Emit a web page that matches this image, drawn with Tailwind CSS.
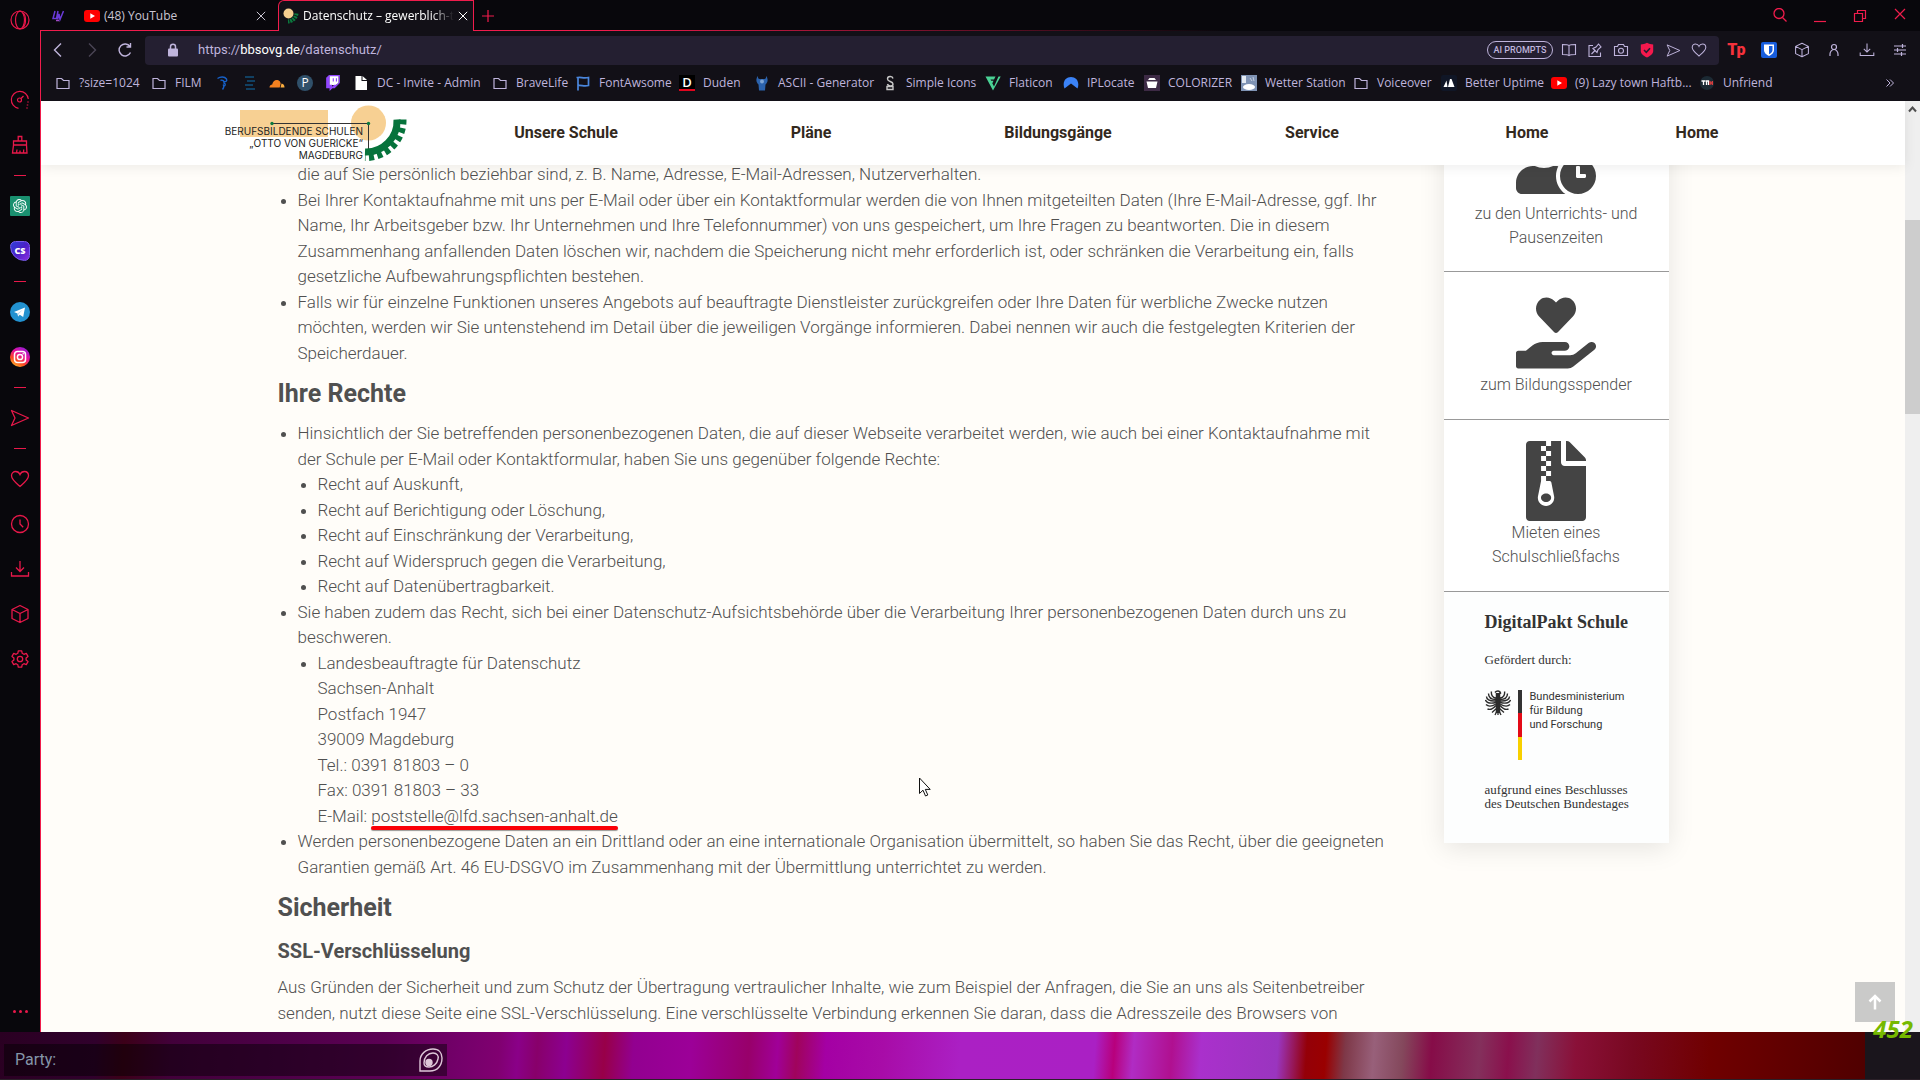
<!DOCTYPE html>
<html lang="de">
<head>
  <meta charset="UTF-8" />
  <meta name="viewport" content="width=device-width, initial-scale=1.0" />
  <title>Datenschutz – gewerblich-technische Schule</title>
  <script src="https://cdn.jsdelivr.net/npm/@tailwindcss/browser@4"></script>
</head>
<body class="h-screen flex flex-col overflow-hidden bg-[#08070c] font-['Open_Sans','Noto_Sans',sans-serif] text-xs text-[#bfb4dc]">

  <!-- Shared icons -->
  <svg class="hidden">
    <symbol id="i-folder" viewBox="0 0 16 16"><path d="M2 3.5h4.5l2 2H14v8H2z" fill="none" stroke="currentColor" stroke-width="1.2" /></symbol>
    <symbol id="i-heart" viewBox="0 0 20 20"><path d="M10 17.5C6 14 1.5 10.500 1.500 6.800 1.500 4 3.500 2.500 5.600 2.500c2 0 3.600 1.100 4.400 3 .8-1.900 2.400-3 4.400-3 2.100 0 4.100 1.500 4.100 4.300 0 3.700-4.500 7.200-8.500 10.700z" fill="none" stroke="currentColor" stroke-width="1.300" /></symbol>
    <symbol id="i-send" viewBox="0 0 20 20"><path d="M1.500 2.500L18.500 10l-17 7.500L5 10z" fill="none" stroke="currentColor" stroke-width="1.300" stroke-linejoin="round" /></symbol>
    <symbol id="i-download" viewBox="0 0 20 20"><path d="M10 2v10M6 8.500l4 4 4-4M1.500 13v4h17v-4" fill="none" stroke="currentColor" stroke-width="1.300" /></symbol>
    <symbol id="i-box" viewBox="0 0 20 20"><path d="M10 1.500l8 4v9l-8 4-8-4v-9zM2 5.500l8 4 8-4M10 9.500v9" fill="none" stroke="currentColor" stroke-width="1.300" stroke-linejoin="round" /></symbol>
    <symbol id="i-youtube" viewBox="0 0 16 16"><rect y="2" width="16" height="12" rx="3" fill="#f00" /><path d="M6.300 5.300v5.400L11 8z" fill="#fff" /></symbol>
    <symbol id="i-close" viewBox="0 0 12 12"><path d="M1 1l10 10M11 1L1 11" fill="none" stroke="currentColor" stroke-width="1.200" /></symbol>
  </svg>

  <div class="flex-1 flex min-h-0">

    <!-- Sidebar -->
    <aside class="w-10 shrink-0 flex flex-col items-center text-[#e8184a]">
      <button class="h-10 w-10 flex items-center justify-center" aria-label="Menü">
        <svg class="size-5" viewBox="0 0 20 20" fill="none" stroke="currentColor" stroke-width="1.2"><circle cx="10" cy="10" r="9" /><ellipse cx="10" cy="10" rx="4.500" ry="8.800" /><path d="M12.500 2.500c4 2 4 13 0 15" /></svg>
      </button>
      <nav class="mt-[37px] flex flex-col items-center">
        <button class="h-[45px] flex items-center" aria-label="GX Control">
          <svg class="size-5" viewBox="0 0 20 20" fill="none" stroke="currentColor" stroke-width="1.200"><path d="M8.500 18.300A8.500 8.500 0 1 1 18.300 9" /><circle cx="9.500" cy="10" r="2" /><path d="M11 8.500l2.500-2.500" /><path d="M18 11.500v1M17.500 14.500v1M17 17.500v1" stroke-width="1.500" /></svg>
        </button>
        <button class="h-[45px] flex items-center" aria-label="GX Cleaner">
          <svg class="size-5" viewBox="0 0 20 20" fill="none" stroke="currentColor" stroke-width="1.300"><path d="M8.200 6V1.500h3.600V6M3.500 6h13v4h-13zM3.500 10L2.500 18h14.500l-.5-8M6.500 18l.5-3.500M10 18v-2.500M13.500 18l.2-3.500" /></svg>
        </button>
        <div class="h-4 flex items-center"><span class="w-3 h-px bg-[#e8184a]"></span></div>
        <button class="h-[45px] flex items-center" aria-label="ChatGPT">
          <svg class="size-5" viewBox="0 0 30 30"><rect width="30" height="30" rx="1.500" fill="#1a9070" /><path transform="translate(4.500 4.500) scale(.875)" fill="#fff" d="M22.2819 9.8211a5.9847 5.9847 0 0 0-.5157-4.9108 6.0462 6.0462 0 0 0-6.5098-2.9A6.0651 6.0651 0 0 0 4.9807 4.1818a5.9847 5.9847 0 0 0-3.9977 2.9 6.0462 6.0462 0 0 0 .7427 7.0966 5.98 5.98 0 0 0 .511 4.9107 6.051 6.051 0 0 0 6.5146 2.9001A5.9847 5.9847 0 0 0 13.2599 24a6.0557 6.0557 0 0 0 5.7718-4.2058 5.9894 5.9894 0 0 0 3.9977-2.9001 6.0557 6.0557 0 0 0-.7475-7.0729zm-9.022 12.6081a4.4755 4.4755 0 0 1-2.8764-1.0408l.1419-.0804 4.7783-2.7582a.7948.7948 0 0 0 .3927-.6813v-6.7369l2.02 1.1686a.071.071 0 0 1 .038.052v5.5826a4.504 4.504 0 0 1-4.4945 4.4944zm-9.6607-4.1254a4.4708 4.4708 0 0 1-.5346-3.0137l.142.0852 4.783 2.7582a.7712.7712 0 0 0 .7806 0l5.8428-3.3685v2.3324a.0804.0804 0 0 1-.0332.0615L9.74 19.9502a4.4992 4.4992 0 0 1-6.1408-1.6464zM2.3408 7.8956a4.485 4.485 0 0 1 2.3655-1.9728V11.6a.7664.7664 0 0 0 .3879.6765l5.8144 3.3543-2.0201 1.1685a.0757.0757 0 0 1-.071 0l-4.8303-2.7865A4.504 4.504 0 0 1 2.3408 7.872zm16.5963 3.8558L13.1038 8.364 15.1192 7.2a.0757.0757 0 0 1 .071 0l4.8303 2.7913a4.4944 4.4944 0 0 1-.6765 8.1042v-5.6772a.79.79 0 0 0-.407-.667zm2.0107-3.0231l-.142-.0852-4.7735-2.7818a.7759.7759 0 0 0-.7854 0L9.409 9.2297V6.8974a.0662.0662 0 0 1 .0284-.0615l4.8303-2.7866a4.4992 4.4992 0 0 1 6.6802 4.66zM8.3065 12.863l-2.02-1.1638a.0804.0804 0 0 1-.038-.0567V6.0742a4.4992 4.4992 0 0 1 7.3757-3.4537l-.142.0805L8.704 5.459a.7948.7948 0 0 0-.3927.6813zm1.0976-2.3654l2.602-1.4998 2.6069 1.4998v2.9994l-2.5974 1.4997-2.6067-1.4997Z" /></svg>
        </button>
        <button class="h-[45px] flex items-center" aria-label="CS">
          <span class="size-5 rounded-md rounded-bl-2xl bg-linear-to-br from-[#2a3fd8] via-[#4a1fc8] to-[#8a2be0] border border-[#7b5cf0] text-white text-[9px] leading-[18px] font-extrabold text-center">CS</span>
        </button>
        <div class="h-4 flex items-center"><span class="w-3 h-px bg-[#e8184a]"></span></div>
        <button class="h-[45px] flex items-center" aria-label="Telegram">
          <svg class="size-5" viewBox="0 0 20 20"><circle cx="10" cy="10" r="10" fill="#2291d0" /><path d="M4 10l11-4.500-1.800 9.500-3.400-2.300-1.700 1.700-.6-3z" fill="#fff" /><path d="M7.500 11.400l5.500-4-4.300 4.700-.6 2.300z" fill="#b8d8ee" /></svg>
        </button>
        <button class="h-[45px] flex items-center" aria-label="Instagram">
          <svg class="size-5" viewBox="0 0 20 20"><defs><linearGradient id="ig" x1="0.200" y1="1" x2="0.800" y2="0"><stop offset="0" stop-color="#ffc02e" /><stop offset=".3" stop-color="#fb4a20" /><stop offset=".6" stop-color="#e8109a" /><stop offset="1" stop-color="#8a1ee0" /></linearGradient></defs><circle cx="10" cy="10" r="10" fill="url(#ig)" /><rect x="4.500" y="4.500" width="11" height="11" rx="3" fill="none" stroke="#fff" stroke-width="1.500" /><circle cx="10" cy="10" r="2.600" fill="none" stroke="#fff" stroke-width="1.500" /><circle cx="13.200" cy="6.800" r=".8" fill="#fff" /></svg>
        </button>
        <div class="h-4 flex items-center"><span class="w-3 h-px bg-[#e8184a]"></span></div>
        <button class="h-[45px] flex items-center" aria-label="Flow"><svg class="size-5"><use href="#i-send" /></svg></button>
        <div class="h-4 flex items-center"><span class="w-3 h-px bg-[#e8184a]"></span></div>
        <button class="h-[45px] flex items-center" aria-label="Lesezeichen"><svg class="size-5"><use href="#i-heart" /></svg></button>
        <button class="h-[45px] flex items-center" aria-label="Verlauf">
          <svg class="size-5" viewBox="0 0 20 20" fill="none" stroke="currentColor" stroke-width="1.300"><circle cx="10" cy="10" r="8.500" /><path d="M10 5.500V10l3.200 3.200" /></svg>
        </button>
        <button class="h-[45px] flex items-center" aria-label="Downloads"><svg class="size-5"><use href="#i-download" /></svg></button>
        <button class="h-[45px] flex items-center" aria-label="Erweiterungen"><svg class="size-5"><use href="#i-box" /></svg></button>
        <button class="h-[45px] flex items-center" aria-label="Einstellungen">
          <svg class="size-5" viewBox="0 0 20 20" fill="none" stroke="currentColor" stroke-width="1.300" stroke-linejoin="round"><circle cx="10" cy="10" r="2.700" /><path d="M8.300 1.800h3.400l.5 2.500 1.700 1 2.400-.9 1.700 3-1.900 1.600v2l1.900 1.600-1.700 3-2.400-.9-1.700 1-.5 2.500H8.300l-.5-2.500-1.700-1-2.400.9-1.700-3L3.900 11V9L2 7.400l1.700-3 2.400.9 1.700-1z" /></svg>
        </button>
      </nav>
      <button class="mt-auto mb-[11px] h-5 flex items-center gap-[3px]" aria-label="Mehr">
        <span class="size-[3px] rounded-full bg-[#e8184a]"></span><span class="size-[3px] rounded-full bg-[#e8184a]"></span><span class="size-[3px] rounded-full bg-[#e8184a]"></span>
      </button>
    </aside>

    <div class="flex-1 min-w-0 flex flex-col">

      <!-- Tabs -->
      <header class="relative h-[31px] shrink-0 flex items-center">
        <div class="absolute inset-x-0 bottom-0 h-px bg-linear-to-r from-[#f01c4c] from-30% to-transparent to-63%"></div>
        <button class="w-9 flex justify-center" aria-label="Angehefteter Tab">
          <svg class="size-3" viewBox="0 0 12 12" fill="none" stroke-width="1.500"><path d="M3 1L1 8.500h3.500L6 1M5.500 9.500L7 4l1 5.500L11.500 1" stroke="#6a3ad8" /><path d="M4 10.500h3" stroke="#a04ac0" /></svg>
        </button>
        <div class="flex w-[202px] items-center gap-1 pl-2 pr-3 text-[#c9c5d2]">
          <svg class="size-4"><use href="#i-youtube" /></svg>
          <span>(48) YouTube</span>
          <button class="ml-auto" aria-label="Tab schließen"><svg class="size-[10px]"><use href="#i-close" /></svg></button>
        </div>
        <div class="relative flex h-[31px] w-[196px] items-center gap-1 border-x border-t border-[#f01c4c] rounded-tl-md bg-[#121017] pl-1 pr-[10px] text-white">
          <svg class="size-4 shrink-0" viewBox="0 0 16 16"><circle cx="5.500" cy="5.500" r="5" fill="#f6cf90" /><path d="M13.500 5.500A9 9 0 0 1 5 13.500" fill="none" stroke="#0b7a3e" stroke-width="4" stroke-dasharray="2 .8" /></svg>
          <span class="whitespace-nowrap mask-r-from-85%">Datenschutz – gewerblich-t</span>
          <button class="ml-auto shrink-0" aria-label="Tab schließen"><svg class="size-[10px]"><use href="#i-close" /></svg></button>
        </div>
        <button class="ml-2 text-[#f01c4c]" aria-label="Neuer Tab"><svg class="size-3" viewBox="0 0 12 12" stroke="currentColor" stroke-width="1.200"><path d="M6 0v12M0 6h12" /></svg></button>
        <div class="ml-auto flex text-[#f01c4c]">
          <button class="w-10 flex justify-center" aria-label="Suchen"><svg class="size-4" viewBox="0 0 16 16" fill="none" stroke="currentColor" stroke-width="1.300"><circle cx="7" cy="5.500" r="5" /><path d="M10.500 9.500l4 4" /></svg></button>
          <button class="w-10 flex justify-center" aria-label="Minimieren"><svg class="size-4" viewBox="0 0 16 16" stroke="currentColor" stroke-width="1.200"><path d="M2 13.500h12" /></svg></button>
          <button class="w-10 flex justify-center" aria-label="Verkleinern"><svg class="size-4" viewBox="0 0 16 16" fill="none" stroke="currentColor" stroke-width="1.200"><path d="M2.500 5.500h8v8h-8zM5.500 5.500v-3h8v8h-3" /></svg></button>
          <button class="w-10 flex justify-center" aria-label="Schließen"><svg class="size-3"><use href="#i-close" /></svg></button>
        </div>
      </header>

      <div class="flex-1 min-h-0 flex flex-col border-l border-[#f01c4c] bg-[#121017]">

        <!-- Address bar -->
        <div class="h-[38px] shrink-0 flex items-center pr-1">
          <button class="w-[34px] flex justify-center" aria-label="Zurück"><svg class="size-4" viewBox="0 0 16 16" fill="none" stroke="currentColor" stroke-width="1.400"><path d="M11 1.500L4.500 8l6.500 6.500" /></svg></button>
          <button class="w-[33px] flex justify-center text-[#4a4556]" aria-label="Vor"><svg class="size-4" viewBox="0 0 16 16" fill="none" stroke="currentColor" stroke-width="1.400"><path d="M5 1.500L11.500 8 5 14.500" /></svg></button>
          <button class="w-[34px] flex justify-center" aria-label="Neu laden"><svg class="size-4" viewBox="0 0 16 16" fill="none" stroke="currentColor" stroke-width="1.400"><path d="M13.500 10.500a6 6 0 1 1-.5-6M13.500 1v4h-4" /></svg></button>
          <div class="ml-[3px] h-[29px] flex-1 flex items-center rounded-sm bg-[#241f31] pr-[7px]">
            <span class="ml-[22px] flex w-[31px] justify-start"><svg class="h-[14px] w-3" viewBox="0 0 12 14"><rect x="1" y="5.500" width="10" height="8" rx="1" fill="currentColor" /><path d="M3.500 6V3.800a2.500 2.500 0 0 1 5 0V6" fill="none" stroke="currentColor" stroke-width="1.500" /></svg></span>
            <a href="https://bbsovg.de/datenschutz/" class="font-['Roboto',sans-serif] text-[13px]">https://<span class="text-white">bbsovg.de</span>/datenschutz/</a>
            <button class="ml-auto mr-[3px] h-[18px] w-[66px] rounded-full border border-[#bfb4dc] font-['Roboto',sans-serif] text-[9px] font-medium">AI PROMPTS</button>
            <button class="w-[26px] flex justify-center" aria-label="Lesemodus"><svg class="size-4" viewBox="0 0 16 16" fill="none" stroke="currentColor" stroke-width="1.100"><path d="M8 3.500v10M8 3.500c-1-1-3-1-6.500-1v10c3.500 0 5.500 0 6.500 1 1-1 3-1 6.500-1v-10c-3.500 0-5.500 0-6.500 1z" /></svg></button>
            <button class="w-[26px] flex justify-center" aria-label="Anheften"><svg class="size-4" viewBox="0 0 16 16" fill="none" stroke="currentColor" stroke-width="1.100"><path d="M6 3.500H2v11h11.500v-4M4.500 12L8 8.500M6 6.500L10 10.500l1-3 3-2.500-2.500-3L9 5z" /></svg></button>
            <button class="w-[26px] flex justify-center" aria-label="Schnappschuss"><svg class="size-4" viewBox="0 0 16 16" fill="none" stroke="currentColor" stroke-width="1.100"><path d="M1.500 4.500h3l1-2h5l1 2h3v9h-13z" /><circle cx="8" cy="8.800" r="2.500" /></svg></button>
            <button class="w-[26px] flex justify-center" aria-label="Werbeblocker"><svg class="size-4" viewBox="0 0 16 16"><path d="M8 .8c2 1.300 4 1.700 6.200 1.700V9c0 3-3 5-6.200 6.500C4.800 14 1.800 12 1.800 9V2.500C4 2.500 6 2.100 8 .8z" fill="#f5194d" /><path d="M5 8l2.300 2.300L11 6.300" fill="none" stroke="#241f31" stroke-width="1.600" /></svg></button>
            <button class="w-[26px] flex justify-center" aria-label="Senden"><svg class="size-[15px]"><use href="#i-send" /></svg></button>
            <button class="w-[26px] flex justify-center" aria-label="Merken"><svg class="size-4"><use href="#i-heart" /></svg></button>
          </div>
          <div class="ml-px grid w-[196px] grid-cols-6 justify-items-center items-center">
            <button class="font-['Roboto',sans-serif] text-base leading-4 font-black text-[#f5323c]">Tp</button>
            <button aria-label="Bitwarden"><svg class="size-4" viewBox="0 0 16 16"><rect width="16" height="16" rx="2" fill="#175ddc" /><path d="M3 2.500h10V8c0 3-2.500 4.700-5 6-2.500-1.300-5-3-5-6z" fill="#fff" /><path d="M8 4h3.500v4c0 2-1.500 3.200-3.500 4.300z" fill="#175ddc" /></svg></button>
            <button aria-label="Erweiterungen"><svg class="size-4"><use href="#i-box" /></svg></button>
            <button aria-label="Profil"><svg class="size-4" viewBox="0 0 16 16" fill="none" stroke="currentColor" stroke-width="1.200"><circle cx="8" cy="5" r="2.500" /><path d="M4 14v-2c0-2.500 2-4.500 4-4.500s4 2 4 4.500v2" /></svg></button>
            <button aria-label="Downloads"><svg class="size-4"><use href="#i-download" /></svg></button>
            <button aria-label="Einfaches Setup"><svg class="size-4" viewBox="0 0 16 16" fill="none" stroke="currentColor" stroke-width="1.200"><path d="M2 4h12M2 8h12M2 12h12M10.500 2v4M5.500 6v4M9.500 10v4" /></svg></button>
          </div>
        </div>

        <!-- Bookmarks bar -->
        <nav class="h-8 shrink-0 flex items-center pl-[14px] pb-1 whitespace-nowrap">
          <a href="#" class="w-24 flex items-center gap-2"><svg class="size-4"><use href="#i-folder" /></svg>?size=1024</a>
          <a href="#" class="w-16 flex items-center gap-2"><svg class="size-4"><use href="#i-folder" /></svg>FILM</a>
          <a href="#" class="w-[27px]" aria-label="Fingerabdruck"><svg class="size-4" viewBox="0 0 16 16" fill="none" stroke="#1660c8" stroke-width="1.400"><path d="M2.500 3.500c3-2 7-2 9 .5 1 2-1 3-2.500 2.500M5.500 5.500c2-1 4 .5 3.500 2.500 2 1 1.500 3-.5 3M8 9.500c1 1 1 3-.5 5" /></svg></a>
          <a href="#" class="w-[27px]" aria-label="Liste"><svg class="size-4" viewBox="0 0 16 16" stroke="#12507c" stroke-width="1.500"><path d="M3 2h9M5 6h8M3 10h8M4 14h9" /></svg></a>
          <a href="#" class="w-7" aria-label="Cloudflare"><svg class="size-4" viewBox="0 0 16 16"><path d="M.5 12.500C.5 10.500 2 9.500 3.200 9.500c.5-3 2.800-5 5.300-4.500 2 .4 3 2 3.200 3.500l-1 4z" fill="#f48120" /><path d="M11.500 12.500l1-4c2 .2 3 1.800 3 4z" fill="#faad3f" /></svg></a>
          <a href="#" class="w-7" aria-label="Pexels"><span class="flex size-4 items-center justify-center rounded-full bg-[#30506a] text-white leading-4">P</span></a>
          <a href="#" class="w-7" aria-label="Twitch"><svg class="size-4" viewBox="0 0 24 24"><path d="M6.500 1.500h14v10l-4 3.500H6.500z" fill="#fff" /><path fill="#9146ff" d="M11.571 4.714h1.715v5.143H11.570zm4.715 0H18v5.143h-1.714zM6 0L1.714 4.286v15.428h5.143V24l4.286-4.286h3.428L22.286 12V0zm14.571 11.143l-3.428 3.428h-3.429l-3 3v-3H6.857V1.714h13.714Z" /></svg></a>
          <a href="#" class="w-[139px] flex items-center gap-2"><svg class="size-4" viewBox="0 0 16 16"><path d="M2.500 1h6v5H14v9H2.500z" fill="#fff" /><path d="M9.500 1L14 5H9.500z" fill="#fff" /></svg>DC - Invite - Admin</a>
          <a href="#" class="w-[83px] flex items-center gap-2"><svg class="size-4"><use href="#i-folder" /></svg>BraveLife</a>
          <a href="#" class="w-[104px] flex items-center gap-2"><svg class="size-4" viewBox="0 0 16 16" fill="none" stroke="#4a86dc" stroke-width="1.700"><path d="M3 15.500V2.500c3-1 5 1.500 10.500 0v8c-5 1.500-7-1-10.500 0M1.500 2.500H4" /></svg>FontAwsome</a>
          <a href="#" class="w-[75px] flex items-center gap-2"><span class="size-4 bg-black border-b-2 border-[#e0051e] text-center text-[13px] leading-[14px] text-white font-semibold">D</span>Duden</a>
          <a href="#" class="w-[128px] flex items-center gap-2"><svg class="size-4" viewBox="0 0 16 16"><path d="M4 1C2 3 1.500 7 4.500 9.500L5 15.500h6l.5-6C14.500 7 14 3 12 1c.3 2-.5 3-1.500 3h-5C4.500 4 3.700 3 4 1z" fill="#2b62ac" /><circle cx="8" cy="6.500" r="2" fill="#7fa5d4" /></svg>ASCII - Generator</a>
          <a href="#" class="w-[103px] flex items-center gap-2"><svg class="size-4" viewBox="0 0 16 16" fill="none" stroke="#c8c8c8" stroke-width="1.400"><path d="M11 3.500C10.500.8 5.500.8 5.500 4c0 3 5.500 2 5.500 5 0 2.500-5 2.500-5.500 0M5 11.500v3h6v-3z" /></svg>Simple Icons</a>
          <a href="#" class="w-[78px] flex items-center gap-2"><svg class="size-4" viewBox="0 0 16 16"><path d="M.5 1.500h10L9 4.500H5.500l.7 1.300h2.300L7.500 8h-.3L9 11.500l4.500-10h2.200L8 15.500z" fill="#4ad295" /></svg>Flaticon</a>
          <a href="#" class="w-[81px] flex items-center gap-2"><svg class="size-4" viewBox="0 0 16 16"><path d="M1.500 13.500C-1 7 2.500 2 8 2s9 5 6.500 11.500L8 8.500z" fill="#3b82f6" /></svg>IPLocate</a>
          <a href="#" class="w-[97px] flex items-center gap-2"><svg class="size-4" viewBox="0 0 16 16"><rect width="16" height="16" fill="#3d2a45" /><path d="M2.500 6.500h11l-1.500 6.500h-8zM4 5h8L10.500 3h-5z" fill="#fff" /></svg>COLORIZER</a>
          <a href="#" class="w-28 flex items-center gap-2"><svg class="size-4" viewBox="0 0 16 16"><rect width="16" height="16" fill="#7f93b4" /><ellipse cx="8" cy="12" rx="6" ry="3" fill="#fff" /><rect x="1" y="1" width="4" height="7" fill="#e4eaf2" /><path d="M9 3l2 3M12 2l1 4" stroke="#c4cfe0" /></svg>Wetter Station</a>
          <a href="#" class="w-[88px] flex items-center gap-2"><svg class="size-4"><use href="#i-folder" /></svg>Voiceover</a>
          <a href="#" class="w-[110px] flex items-center gap-2"><svg class="size-4" viewBox="0 0 16 16"><rect width="16" height="16" rx="2" fill="#101626" /><path d="M2.500 12L5.500 5.500 6.500 12zM7 12l2-8h1.500l3 8z" fill="#fff" /></svg>Better Uptime</a>
          <a href="#" class="w-[148px] flex items-center gap-2"><svg class="size-4"><use href="#i-youtube" /></svg>(9) Lazy town Haftb...</a>
          <a href="#" class="flex items-center gap-2"><svg class="size-4" viewBox="0 0 16 16"><circle cx="8" cy="8" r="7" fill="#1c2a34" /><path d="M2.500 6h4M4.500 6v4M7.500 10V6h2v4" stroke="#fff" stroke-width="1.300" fill="none" /><path d="M11 6v4M13.300 6v4M11 8h2" stroke="#e04040" stroke-width="1.300" /></svg>Unfriend</a>
          <button class="ml-auto mr-[26px]" aria-label="Weitere Lesezeichen"><svg class="size-2" viewBox="0 0 8 8" fill="none" stroke="currentColor"><path d="M.5 .5L4 4 .5 7.500M4 .5L7.500 4 4 7.500" /></svg></button>
        </nav>

        <!-- Web page -->
        <div class="relative flex-1 min-h-0 flex overflow-hidden bg-[#fffdf9] font-['Roboto',sans-serif] text-[#505050]">
          <div class="flex-1 min-w-0">

            <header class="absolute inset-x-0 top-0 z-10 mr-[15px] h-16 flex items-center bg-white pl-[184px] shadow-[0_2px_12px_rgba(0,0,0,0.08)]">
              <a href="#" aria-label="Berufsbildende Schulen Otto von Guericke">
                <svg class="h-16 w-[183px] font-['Inter',sans-serif] text-[10px]" viewBox="0 0 183 64">
                  <rect x="15" y="9" width="88" height="27" fill="#f7d093" />
                  <circle cx="143.500" cy="22" r="17.500" fill="#f7d093" />
                  <path d="M47 22.500h96.500v26" fill="none" stroke="#333" />
                  <circle cx="47" cy="22.500" r="1.700" fill="#0b7a3e" /><circle cx="143.500" cy="22.500" r="1.700" fill="#0b7a3e" />
                  <path d="M172 18.500A31 31 0 0 1 140 51" fill="none" stroke="#06733c" stroke-width="7" />
                  <path d="M178 18.500A37 37 0 0 1 140 56.500" fill="none" stroke="#06733c" stroke-width="7" stroke-dasharray="5 3.500" />
                  <g fill="#222" text-anchor="end">
                    <text x="138" y="34">BERUFSBILDENDE SCHULEN</text>
                    <text x="138" y="46">„OTTO VON GUERICKE“</text>
                    <text x="138" y="58">MAGDEBURG</text>
                  </g>
                </svg>
              </a>
              <nav class="ml-[26px] grid grid-cols-[264px_226px_268px_240px_190px_150px] text-center text-base font-bold text-[#33291d]">
                <a href="#">Unsere Schule</a>
                <a href="#">Pläne</a>
                <a href="#">Bildungsgänge</a>
                <a href="#">Service</a>
                <a href="#">Home</a>
                <a href="#">Home</a>
              </nav>
            </header>

            <div class="mx-auto flex max-w-[1391px] items-start justify-between">
              <main class="pt-[61px] whitespace-nowrap text-[17px] leading-normal font-light">
                <ul class="list-disc pl-5">
                  <li class="list-none">die auf Sie persönlich beziehbar sind, z. B. Name, Adresse, E-Mail-Adressen, Nutzerverhalten.</li>
                  <li>Bei Ihrer Kontaktaufnahme mit uns per E-Mail oder über ein Kontaktformular werden die von Ihnen mitgeteilten Daten (Ihre E-Mail-Adresse, ggf. Ihr<br>Name, Ihr Arbeitsgeber bzw. Ihr Unternehmen und Ihre Telefonnummer) von uns gespeichert, um Ihre Fragen zu beantworten. Die in diesem<br>Zusammenhang anfallenden Daten löschen wir, nachdem die Speicherung nicht mehr erforderlich ist, oder schränken die Verarbeitung ein, falls<br>gesetzliche Aufbewahrungspflichten bestehen.</li>
                  <li>Falls wir für einzelne Funktionen unseres Angebots auf beauftragte Dienstleister zurückgreifen oder Ihre Daten für werbliche Zwecke nutzen<br>möchten, werden wir Sie untenstehend im Detail über die jeweiligen Vorgänge informieren. Dabei nennen wir auch die festgelegten Kriterien der<br>Speicherdauer.</li>
                </ul>
                <h2 class="mt-3 mb-[11px] text-[25px] leading-8 font-bold">Ihre Rechte</h2>
                <ul class="list-disc pl-5">
                  <li>Hinsichtlich der Sie betreffenden personenbezogenen Daten, die auf dieser Webseite verarbeitet werden, wie auch bei einer Kontaktaufnahme mit<br>der Schule per E-Mail oder Kontaktformular, haben Sie uns gegenüber folgende Rechte:
                    <ul class="list-disc pl-5">
                      <li>Recht auf Auskunft,</li>
                      <li>Recht auf Berichtigung oder Löschung,</li>
                      <li>Recht auf Einschränkung der Verarbeitung,</li>
                      <li>Recht auf Widerspruch gegen die Verarbeitung,</li>
                      <li>Recht auf Datenübertragbarkeit.</li>
                    </ul>
                  </li>
                  <li>Sie haben zudem das Recht, sich bei einer Datenschutz-Aufsichtsbehörde über die Verarbeitung Ihrer personenbezogenen Daten durch uns zu<br>beschweren.
                    <ul class="list-disc pl-5">
                      <li>Landesbeauftragte für Datenschutz<br>Sachsen-Anhalt<br>Postfach 1947<br>39009 Magdeburg<br>Tel.: 0391 81803 – 0<br>Fax: 0391 81803 – 33<br>E-Mail: <a href="mailto:poststelle@lfd.sachsen-anhalt.de" class="relative">poststelle@lfd.sachsen-anhalt.de<span class="absolute inset-x-0 -bottom-1 h-1 rounded-full bg-[#fb0007] shadow-[0_1px_1px_rgba(0,0,0,0.4)]"></span></a></li>
                    </ul>
                  </li>
                  <li>Werden personenbezogene Daten an ein Drittland oder an eine internationale Organisation übermittelt, so haben Sie das Recht, über die geeigneten<br>Garantien gemäß Art. 46 EU-DSGVO im Zusammenhang mit der Übermittlung unterrichtet zu werden.</li>
                </ul>
                <h2 class="mt-3 mb-[11px] text-[25px] leading-8 font-bold">Sicherheit</h2>
                <h3 class="mb-2 text-xl leading-8 font-bold">SSL-Verschlüsselung</h3>
                <p>Aus Gründen der Sicherheit und zum Schutz der Übertragung vertraulicher Inhalte, wie zum Beispiel der Anfragen, die Sie an uns als Seitenbetreiber<br>senden, nutzt diese Seite eine SSL-Verschlüsselung. Eine verschlüsselte Verbindung erkennen Sie daran, dass die Adresszeile des Browsers von</p>
              </main>

              <aside class="w-[225px] shrink-0 divide-y divide-[#999] bg-white text-center text-base font-light shadow-[0_5px_25px_rgba(0,0,0,0.1)]">
                <a href="#" class="block py-[21px]">
                  <span class="flex h-20 items-center justify-center"><svg class="h-16 w-20" viewBox="0 0 640 512" fill="#444"><path d="M496 224c-79.600 0-144 64.400-144 144s64.400 144 144 144 144-64.400 144-144-64.400-144-144-144zm64 150.300c0 5.300-4.400 9.700-9.700 9.700h-60.600c-5.300 0-9.700-4.400-9.700-9.700v-76.600c0-5.300 4.400-9.700 9.700-9.700h12.600c5.300 0 9.700 4.400 9.700 9.700V352h38.300c5.300 0 9.700 4.400 9.700 9.700v12.600zM320 368c0-27.800 6.700-54.100 18.200-77.500-8-1.500-16.200-2.500-24.600-2.500h-16.700c-22.200 10.200-46.900 16-72.900 16s-50.600-5.800-72.900-16h-16.700C60.200 288 0 348.200 0 422.400V464c0 26.500 21.500 48 48 48h347.100c-45.300-31.900-75.100-84.500-75.100-144zm-96-112c70.700 0 128-57.300 128-128S294.700 0 224 0 96 57.300 96 128s57.300 128 128 128z" /></svg></span>
                  zu den Unterrichts- und<br>Pausenzeiten
                </a>
                <a href="#" class="block pt-[21px] pb-[22px]">
                  <span class="flex h-20 items-center justify-center"><svg class="h-[72px] w-20" viewBox="0 0 576 512" fill="#444"><path d="M275.300 250.500c7 7.400 18.400 7.400 25.500 0l108.900-114.200c31.600-33.200 29.800-88.200-5.600-118.800-30.800-26.700-76.700-21.900-104.900 7.700L288 36.900l-11.100-11.600C248.700-4.400 202.800-9.200 172 17.500c-35.300 30.600-37.200 85.600-5.600 118.800l108.900 114.200zm290 77.600c-11.800-10.700-30.200-10-42.600 0L430.300 402c-11.300 9.100-25.400 14-40 14H272c-8.800 0-16-7.200-16-16s7.200-16 16-16h78.300c15.900 0 30.700-10.900 33.300-26.600 3.300-20-12.100-37.400-31.600-37.400H192c-27 0-53.100 9.300-74.100 26.300L71.400 384H16c-8.800 0-16 7.200-16 16v96c0 8.800 7.200 16 16 16h356.800c14.500 0 28.600-4.900 40-14L564 377c15.200-12.100 16.400-35.300 1.300-48.900z" /></svg></span>
                  zum Bildungsspender
                </a>
                <a href="#" class="block pt-[21px] pb-[22px]">
                  <span class="flex h-20 items-center justify-center"><svg class="h-20 w-[60px]" viewBox="0 0 384 512" fill="#444"><path d="M377 105L279.100 7c-4.500-4.500-10.600-7-17-7H256v128h128v-6.100c0-6.300-2.500-12.400-7-16.900zM128.400 336c-17.900 0-32.400 12.100-32.400 27 0 15 14.600 27 32.500 27s32.400-12.100 32.400-27-14.600-27-32.500-27zM224 136V0h-63.600v32h-32V0H24C10.700 0 0 10.700 0 24v464c0 13.300 10.700 24 24 24h336c13.300 0 24-10.700 24-24V160H248c-13.200 0-24-10.800-24-24zM95.900 32h32v32h-32zm32.300 384c-33.200 0-58-30.400-51.400-62.900L96.400 256v-32h32v-32h-32v-32h32v-32h-32V96h32V64h32v32h-32v32h32v32h-32v32h32v32h-32v32h22.100c5.700 0 10.700 4.100 11.800 9.700l17.300 87.700c6.400 32.400-18.400 62.600-51.400 62.600z" /></svg></span>
                  Mieten eines<br>Schulschließfachs
                </a>
                <section class="whitespace-nowrap bg-[#fdfefe] pt-[18px] pb-8 pl-[41px] text-left font-['Liberation_Serif',serif] text-[13px] font-normal text-[#333]">
                  <h4 class="text-lg leading-6 font-bold">DigitalPakt Schule</h4>
                  <p class="mt-[18px] leading-4">Gefördert durch:</p>
                  <div class="mt-[22px] flex h-[70px] items-start">
                    <svg class="h-[26px] w-[26px]" viewBox="0 0 26 26" fill="none" stroke="#2b2b2b"><path d="M13 3v20" stroke-width="4.500" /><path d="M10 2.500c1.500-2 5-2 5.500.5l-2 1" stroke-width="1.500" /><path d="M11 8C7 8 6 4 6.500 1.500M11 9.500C5 9.500 3.500 6 3.500 3.500M11 11C4 11.500 1.500 9 1.500 6.500M11 12.500C4 14 1 12.500 .5 10M11 14c-5 3-8.500 2-10 .5M11 15.500c-3 3.500-6 4.500-8.500 3.500M15 8c4 0 5-4 4.500-6.500M15 9.500c6 0 7.500-3.500 7.500-6M15 11c7 .5 9.500-2 9.500-4.500M15 12.500c7 1.500 10 0 10.500-2.500M15 14c5 3 8.500 2 10 .5M15 15.500c3 3.500 6 4.500 8.500 3.500" stroke-width="1.400" /><path d="M12 18l-5 4.500M14 18l5 4.500M10 25l3-6 3 6M13 19v6" stroke-width="1.300" /></svg>
                    <div class="ml-[7px] flex h-[70px] w-1 flex-col">
                      <span class="flex-1 bg-[#333]"></span><span class="flex-1 bg-[#e30b17]"></span><span class="flex-1 bg-[#f8d000]"></span>
                    </div>
                    <p class="ml-2 font-['Roboto',sans-serif] text-[11px] leading-[14px]">Bundesministerium<br>für Bildung<br>und Forschung</p>
                  </div>
                  <p class="mt-[23px] leading-[14px]">aufgrund eines Beschlusses<br>des Deutschen Bundestages</p>
                </section>
              </aside>
            </div>

            <button class="absolute right-[25px] bottom-[10px] flex size-10 items-center justify-center bg-[#cacac9]" aria-label="Nach oben">
              <svg class="size-4" viewBox="0 0 16 16" fill="none" stroke="#fff" stroke-width="2.500"><path d="M8 15.500V2M2.500 7.500L8 2l5.500 5.500" /></svg>
            </button>
          </div>

          <!-- Scrollbar -->
          <div class="w-[15px] shrink-0 flex flex-col items-center bg-[#efefef]">
            <svg class="mt-1 h-2 w-[9px]" viewBox="0 0 9 8" fill="none" stroke="#505050" stroke-width="2"><path d="M1 6.500l3.500-4 3.500 4" /></svg>
            <div class="mt-[107px] h-[194px] w-full bg-[#cdcdcd]"></div>
          </div>
        </div>
      </div>
    </div>
  </div>

  <!-- Desktop strip -->
  <footer class="h-12 shrink-0 flex items-end border-b border-[#2a2028] bg-[linear-gradient(94deg,#2a0022_0%,#30002c_5%,#3c0018_6.500%,#42003a_9%,#4c0046_14%,#5c0054_20%,#74006a_24%,#800070_26%,#8a0088_27%,#88006a_28%,#8c0090_29.500%,#980048_31.500%,#920090_33%,#9c0098_36%,#98006a_39%,#a00098_40.500%,#a0045c_41.500%,#a400a4_43%,#a80ca8_46%,#ab20c4_50%,#aa20c4_57%,#b8007c_58%,#b02cc4_59%,#b01090_61%,#aa30cc_62.500%,#9a35bf_66.500%,#940008_68%,#9a0000_69%,#7e3848_70%,#98607a_71.500%,#84485c_73%,#860c48_74.500%,#84305c_77%,#8a104c_78.500%,#80305c_80%,#8a1038_82%,#780820_85%,#700000_89%,#500000_97%)]">
    <div class="mb-[3px] ml-1 flex h-8 w-[443px] items-center bg-black/45 pl-[11px] pr-[4px] font-['Roboto',sans-serif] text-base text-[#8595a8]">
      <label for="party">Party:</label>
      <input id="party" type="text" class="min-w-0 flex-1 bg-transparent pl-2 outline-none" />
      <svg class="size-6" viewBox="0 0 24 24" fill="none" stroke="#ddc6d8" stroke-width="1.400"><path d="M1 23V13C1 6 7 1 14 1c6 0 9 4 9 9 0 8-5 13-12 13z" /><path d="M5 15c0-6 4-10 9-10 4 0 6 3 5 6-1 5-5 8-9 8-3 0-5-1-5-4z" /><circle cx="10" cy="14.500" r="3" fill="#ddc6d8" /></svg>
    </div>
    <div class="ml-auto h-full w-[55px] bg-[#1a151c]"></div>
  </footer>

  <!-- FPS counter -->
  <div class="absolute right-[7px] bottom-[39px] z-20 font-['Noto_Sans',sans-serif] text-2xl leading-6 font-bold italic text-[#76b900]">452</div>

  <!-- Mouse pointer -->
  <svg class="absolute left-[919px] top-[777px] z-20 h-5 w-3" viewBox="0 0 12 20" fill="#fff" stroke="#111"><path d="M.5 1v15.500l3.500-3.300 2.500 5.800 2.300-1-2.500-5.600h4.900z" /></svg>
</body>
</html>
